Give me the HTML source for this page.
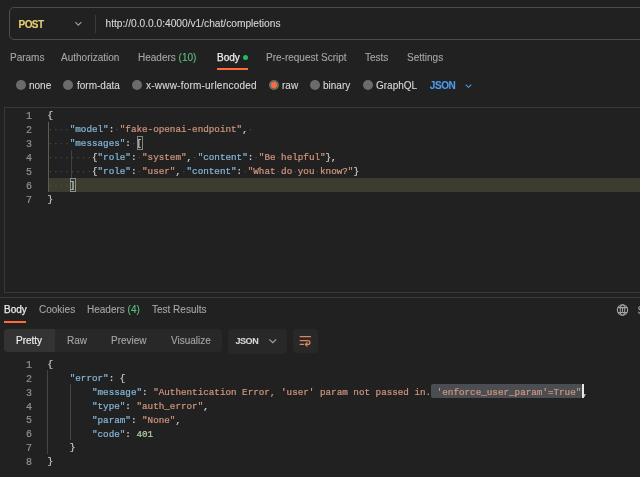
<!DOCTYPE html>
<html><head><meta charset="utf-8">
<style>
*{margin:0;padding:0;box-sizing:border-box}
html,body{width:640px;height:477px;overflow:hidden;background:#212121}
body{position:relative;font-family:"Liberation Sans",sans-serif;color:#a6a6a6;font-size:10px;-webkit-text-stroke:0.1px}
.a{position:absolute;white-space:pre}
.urlbox{position:absolute;left:9px;top:7px;width:700px;height:33px;border:1px solid #4d4d4d;border-radius:5px}
.post{color:#e8d274;font-weight:bold;font-size:10px;letter-spacing:-0.6px;left:18.6px;top:18.8px}
.divv{position:absolute;left:95px;top:15px;width:1px;height:18px;background:#3a3a3a}
.url{color:#d6d6d6;font-size:10.2px;left:105.5px;top:17.5px}
.tab{top:52.2px;color:#a6a6a6}
.white{color:#ebebeb;-webkit-text-stroke:0.25px}
.green{color:#5fbf85}
.uline{position:absolute;height:2px;background:#ff6c37}
.radio{position:absolute;width:10px;height:10px;border-radius:50%;background:#6b6b6b;top:80px}
.rlab{top:80.3px;color:#d9d9d9}
.editor{position:absolute;left:4px;top:107px;width:700px;height:186px;border:1px solid #383838;border-right:none}
.sep{position:absolute;left:0;top:297px;width:640px;height:1px;background:#383838}
.code{font-family:"Liberation Mono",monospace;font-size:9.28px;line-height:14px}
.code .a{margin-top:1.3px;-webkit-text-stroke:0.22px}
.code .w{-webkit-text-stroke:0}
.code .ln{margin-top:2px}
.ln{position:absolute;width:20px;text-align:right;color:#8f8f8f;left:12px;font-size:10px}
.k{color:#84b6d8}.s{color:#cf957c}.p{color:#cfcfcf}.n{color:#b5cea8}.w{color:#4d4d4d}
.hl{position:absolute;left:48px;top:178px;width:600px;height:14px;background:#3d3c30}
.guide{position:absolute;width:1px;background:#4a4a4a}
.seg{position:absolute;left:4px;top:329px;width:218px;height:23px;background:#282828;border-radius:4px}
.segsel{position:absolute;left:4px;top:329px;width:51px;height:23px;background:#333;border-radius:4px 0 0 4px}
.btn{position:absolute;background:#282828;border-radius:4px}
.wrap{position:absolute;left:0;top:0;width:640px;height:477px;will-change:transform}</style></head><body><div class="wrap">
<div class="urlbox"></div>
<div class="a post">POST</div>
<svg class="a" style="left:73px;top:20px" width="11" height="8" viewBox="0 0 11 8"><path d="M2.3 2.2L5.3 5.1L8.3 2.2" fill="none" stroke="#a0a0a0" stroke-width="1.15"/></svg>
<div class="divv"></div>
<div class="a url">http://0.0.0.0:4000/v1/chat/completions</div>

<div class="a tab" style="left:10px">Params</div>
<div class="a tab" style="left:61px">Authorization</div>
<div class="a tab" style="left:138px">Headers <span class="green">(10)</span></div>
<div class="a tab white" style="left:217px">Body</div>
<div class="a" style="left:243px;top:55px;width:5px;height:5px;border-radius:50%;background:#1fbf5f"></div>
<div class="uline" style="left:217px;top:68px;width:31px"></div>
<div class="a tab" style="left:266px">Pre-request Script</div>
<div class="a tab" style="left:365px">Tests</div>
<div class="a tab" style="left:407px">Settings</div>

<div class="radio" style="left:16px"></div><div class="a rlab" style="left:29px">none</div>
<div class="radio" style="left:63px"></div><div class="a rlab" style="left:77px">form-data</div>
<div class="radio" style="left:132px"></div><div class="a rlab" style="left:146px;letter-spacing:0.22px">x-www-form-urlencoded</div>
<div class="radio" style="left:269px;background:#6b6b6b"><div style="position:absolute;left:2px;top:2px;width:6px;height:6px;border-radius:50%;background:#ff6c37"></div></div><div class="a rlab" style="left:282px">raw</div>
<div class="radio" style="left:310px"></div><div class="a rlab" style="left:323px">binary</div>
<div class="radio" style="left:363px"></div><div class="a rlab" style="left:376px">GraphQL</div>
<div class="a rlab" style="left:429.8px;top:80.2px;color:#4f9bea;font-size:10px;font-weight:bold;letter-spacing:-0.45px">JSON</div>
<svg class="a" style="left:464px;top:82.5px" width="9" height="6" viewBox="0 0 9 6"><path d="M1.7 1.6L4.5 4.3L7.3 1.6" fill="none" stroke="#4f9bea" stroke-width="1.1"/></svg>

<div class="editor"></div>
<div class="hl"></div>
<div class="guide" style="left:48px;top:122px;height:70px;background:#5e5d50"></div>
<div class="guide" style="left:70.5px;top:150px;height:28px;background:#404040"></div>
<div class="a" style="left:137px;top:136px;width:6px;height:14px;border:1px solid #858580;background:#1e231d"></div>
<div class="a" style="left:70px;top:178px;width:6px;height:14px;border:1px solid #8f8f8a;background:#2b3427"></div>
<div class="code">
<div class="a ln" style="top:108px">1</div>
<div class="a ln" style="top:122px">2</div>
<div class="a ln" style="top:136px">3</div>
<div class="a ln" style="top:150px">4</div>
<div class="a ln" style="top:164px">5</div>
<div class="a ln" style="top:178px">6</div>
<div class="a ln" style="top:192px">7</div>
<div class="a" style="left:47.5px;top:108px"><span class="p">{</span></div>
<div class="a" style="left:47.5px;top:122px"><span class="w">····</span><span class="k">"model"</span><span class="p">:</span><span class="w">·</span><span class="s">"fake-openai-endpoint"</span><span class="p">,</span><span class="w">·</span></div>
<div class="a" style="left:47.5px;top:136px"><span class="w">····</span><span class="k">"messages"</span><span class="p">:</span><span class="w">·</span><span class="p">[</span></div>
<div class="a" style="left:47.5px;top:150px"><span class="w">········</span><span class="p">{</span><span class="k">"role"</span><span class="p">:</span><span class="w">·</span><span class="s">"system"</span><span class="p">,</span><span class="w">·</span><span class="k">"content"</span><span class="p">:</span><span class="w">·</span><span class="s">"Be<span class="w">·</span>helpful"</span><span class="p">},</span></div>
<div class="a" style="left:47.5px;top:164px"><span class="w">········</span><span class="p">{</span><span class="k">"role"</span><span class="p">:</span><span class="w">·</span><span class="s">"user"</span><span class="p">,</span><span class="w">·</span><span class="k">"content"</span><span class="p">:</span><span class="w">·</span><span class="s">"What<span class="w">·</span>do<span class="w">·</span>you<span class="w">·</span>know?"</span><span class="p">}</span></div>
<div class="a" style="left:47.5px;top:178px"><span class="w">····</span><span class="p">]</span></div>
<div class="a" style="left:47.5px;top:192px"><span class="p">}</span></div>
</div>

<div class="sep"></div>
<div class="a" style="left:4px;top:304.4px;color:#ebebeb;-webkit-text-stroke:0.25px">Body</div>
<div class="a" style="left:39px;top:304.4px">Cookies</div>
<div class="a" style="left:87px;top:304.4px">Headers <span class="green">(4)</span></div>
<div class="a" style="left:152px;top:304.4px">Test Results</div>
<div class="uline" style="left:4px;top:321px;width:22px"></div>
<svg class="a" style="left:612px;top:300px" width="22" height="20" viewBox="0 0 22 20"><g fill="none" stroke="#a3a3a3" stroke-width="1.05"><circle cx="10.5" cy="10" r="5.2"/><ellipse cx="10.5" cy="10" rx="2.3" ry="5.2"/><path d="M5.9 7.6H15.1M5.9 12.4H15.1M10.5 8.2V11.8"/></g></svg>

<div class="a" style="left:637.6px;top:305.4px">Status</div>
<div class="seg"></div><div class="segsel"></div>
<div class="a" style="left:16px;top:335px;color:#ebebeb;-webkit-text-stroke:0.2px">Pretty</div>
<div class="a" style="left:67px;top:335px">Raw</div>
<div class="a" style="left:111px;top:335px">Preview</div>
<div class="a" style="left:171px;top:335px">Visualize</div>
<div class="btn" style="left:228px;top:329px;width:59px;height:24.5px"></div>
<div class="a" style="left:235.5px;top:336.4px;color:#d6d6d6;font-size:9px;font-weight:bold;letter-spacing:-0.45px">JSON</div>
<svg class="a" style="left:267px;top:337px" width="11" height="8" viewBox="0 0 11 8"><path d="M2.3 2.3L5.75 5.75L9.2 2.3" fill="none" stroke="#a6a6a6" stroke-width="1.1"/></svg>
<div class="btn" style="left:293px;top:329px;width:25px;height:24px"></div>
<svg class="a" style="left:296px;top:332px" width="20" height="18" viewBox="0 0 20 18"><g fill="none" stroke="#de845f" stroke-width="1.3" stroke-linecap="round" stroke-linejoin="round"><path d="M4.2 4.7H14.5M4.2 8.6H12A1.925 1.925 0 0 1 12 12.45H9.6M4.2 12.45H7.5"/><path d="M11.1 10.8L9.4 12.45L11.1 14.1"/></g></svg>

<div class="guide" style="left:47px;top:370px;height:84px;background:#48473e"></div>
<div class="guide" style="left:70px;top:384px;height:56px;background:#48473e"></div>
<div class="a" style="left:431px;top:384px;width:151px;height:14px;background:#4a4d52;border-radius:2px"></div>
<div class="a" style="left:582.2px;top:384px;width:1.6px;height:14px;background:#e8e8e8"></div>
<div class="code">
<div class="a ln" style="top:357.00px">1</div>
<div class="a ln" style="top:370.85px">2</div>
<div class="a ln" style="top:384.70px">3</div>
<div class="a ln" style="top:398.55px">4</div>
<div class="a ln" style="top:412.40px">5</div>
<div class="a ln" style="top:426.25px">6</div>
<div class="a ln" style="top:440.10px">7</div>
<div class="a ln" style="top:453.95px">8</div>
<div class="a" style="left:47.5px;top:357.00px"><span class="p">{</span></div>
<div class="a" style="left:47.5px;top:370.85px">    <span class="k">"error"</span><span class="p">: {</span></div>
<div class="a" style="left:47.5px;top:384.70px">        <span class="k">"message"</span><span class="p">: </span><span class="s">"Authentication Error, 'user' param not passed in. 'enforce_user_param'=True"</span><span class="p" style="position:relative;left:1.2px">,</span></div>
<div class="a" style="left:47.5px;top:398.55px">        <span class="k">"type"</span><span class="p">: </span><span class="s">"auth_error"</span><span class="p">,</span></div>
<div class="a" style="left:47.5px;top:412.40px">        <span class="k">"param"</span><span class="p">: </span><span class="s">"None"</span><span class="p">,</span></div>
<div class="a" style="left:47.5px;top:426.25px">        <span class="k">"code"</span><span class="p">: </span><span class="n">401</span></div>
<div class="a" style="left:47.5px;top:440.10px">    <span class="p">}</span></div>
<div class="a" style="left:47.5px;top:453.95px"><span class="p">}</span></div>
</div>
</div></body></html>
